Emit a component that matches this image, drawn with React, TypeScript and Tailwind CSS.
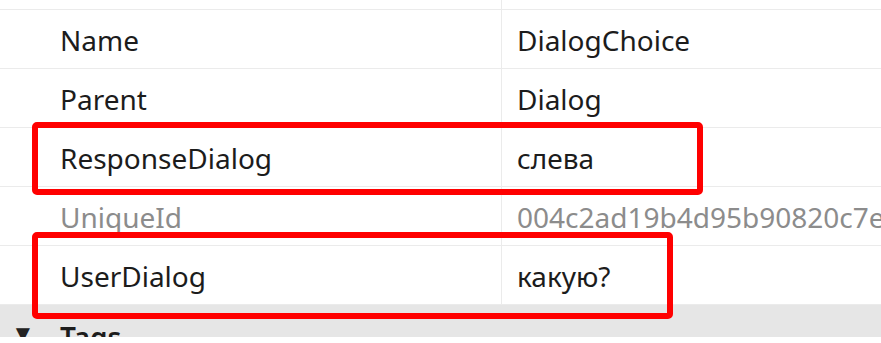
import React from "react";

interface PropRow {
  name: string;
  value: string;
  muted?: boolean;
}

const rows: PropRow[] = [
  { name: "Name", value: "DialogChoice" },
  { name: "Parent", value: "Dialog" },
  { name: "ResponseDialog", value: "слева" },
  { name: "UniqueId", value: "004c2ad19b4d95b90820c7e4f1a2", muted: true },
  { name: "UserDialog", value: "какую?" },
];

const App: React.FC = () => {
  return (
    <div
      className="relative w-[881px] h-[343px] overflow-hidden bg-white text-[28px]"
      style={{ fontFamily: '"Noto Sans", "Open Sans", sans-serif' }}
    >
      {/* top spacer, rest of the row above */}
      <div className="flex h-[10px] border-b border-[#ebebeb]">
        <div className="w-[502px] border-r border-[#ebebeb]" />
      </div>

      {rows.map((row, idx) => (
        <div key={idx} className="flex h-[59px] border-b border-[#ebebeb]">
          <div
            className={`w-[502px] shrink-0 border-r border-[#ebebeb] pl-[60px] pt-[2px] flex items-center ${
              row.muted ? "text-[#8c8c8c]" : "text-[#1c1c1c]"
            }`}
          >
            {row.name}
          </div>
          <div
            className={`pl-[15px] pt-[2px] flex items-center whitespace-nowrap ${
              row.muted ? "text-[#8c8c8c]" : "text-[#1c1c1c]"
            }`}
          >
            {row.value}
          </div>
        </div>
      ))}

      {/* Tags category header, cut by the screenshot */}
      <div className="flex h-[32px] bg-[#e6e6e6] overflow-hidden">
        <span className="w-[60px] pl-[11px] pt-[16px] text-[24px] leading-none text-[#222]">▼</span>
        <span className="pt-[18px] font-semibold leading-none text-[#1c1c1c]">Tags</span>
      </div>
      <div className="h-[6px] bg-white" />

      {/* red annotation boxes */}
      <div className="absolute left-[32px] top-[122px] w-[671px] h-[73px] border-[6px] border-[#ff0000] rounded-[5px]" />
      <div className="absolute left-[32px] top-[232px] w-[641px] h-[87px] border-[6px] border-[#ff0000] rounded-[5px]" />
    </div>
  );
};

export default App;
